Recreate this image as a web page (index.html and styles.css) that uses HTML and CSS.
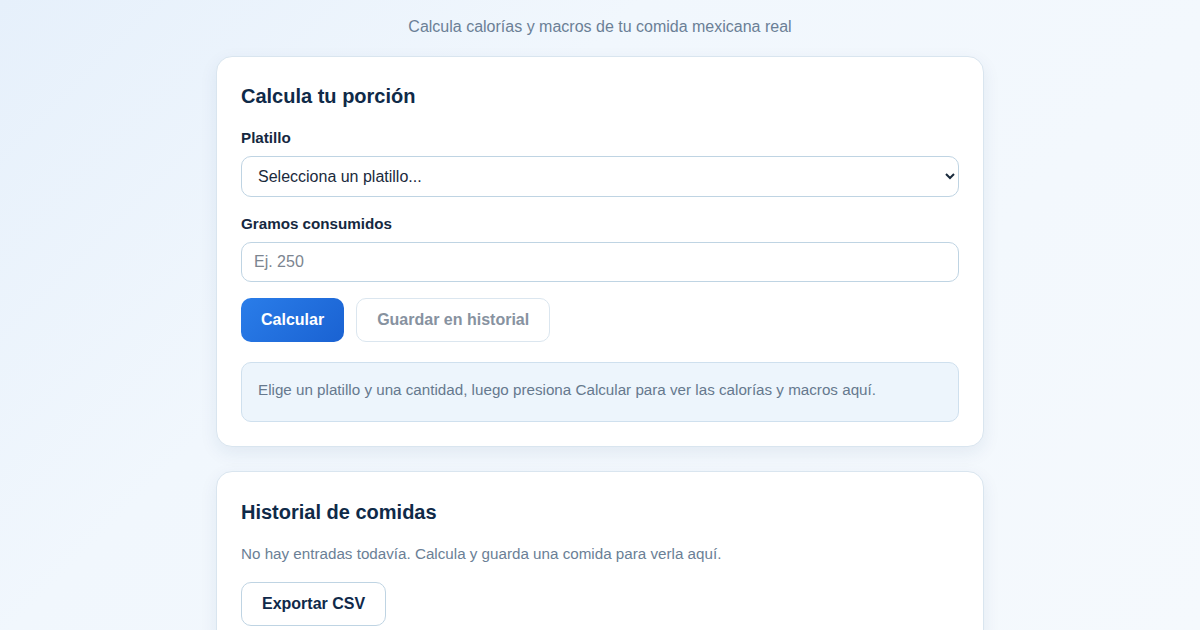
FILE: index.html
```html
<!DOCTYPE html>
<html lang="es">
<head>
<meta charset="utf-8">
<title>Calculadora</title>
<link rel="stylesheet" href="styles.css">
</head>
<body>
<main class="page">
  <p class="subtitle">Calcula calorías y macros de tu comida mexicana real</p>

  <section class="card">
    <h2 class="card-title">Calcula tu porción</h2>
    <label class="label" for="dish">Platillo</label>
    <select id="dish" class="field select">
      <option>Selecciona un platillo...</option>
    </select>
    <label class="label label-second" for="grams">Gramos consumidos</label>
    <input id="grams" class="field input" type="text" placeholder="Ej. 250">
    <div class="actions">
      <button class="btn btn-primary">Calcular</button>
      <button class="btn btn-ghost" disabled>Guardar en historial</button>
    </div>
    <div class="info">Elige un platillo y una cantidad, luego presiona Calcular para ver las calorías y macros aquí.</div>
  </section>

  <section class="card card-history">
    <h2 class="card-title card-title-second">Historial de comidas</h2>
    <p class="empty">No hay entradas todavía. Calcula y guarda una comida para verla aquí.</p>
    <button class="btn btn-outline">Exportar CSV</button>
  </section>
</main>
</body>
</html>
```

FILE: styles.css
```css
* { box-sizing: border-box; }

html, body {
  margin: 0;
  height: 100%;
}

body {
  font-family: "Liberation Sans", Arial, sans-serif;
  background: linear-gradient(135deg, #e6f0fb 0%, #f1f7fd 35%, #f5f9fd 100%);
  color: #10294a;
  overflow: hidden;
}

.page {
  width: 768px;
  margin: 0 auto;
  padding-top: 15px;
}

.subtitle {
  margin: 0 0 17px;
  text-align: center;
  font-size: 16px;
  line-height: 24px;
  color: #6b7f96;
}

.card {
  background: #ffffff;
  border: 1px solid #d9e5ef;
  border-radius: 16px;
  padding: 24px;
  box-shadow: 0 6px 18px rgba(30, 70, 120, 0.08);
  display: flex;
  flex-direction: column;
  align-items: flex-start;
}

.card-history {
  margin-top: 24px;
}

.card-title {
  margin: 0;
  font-size: 20px;
  line-height: 30px;
  font-weight: 700;
  color: #0f2a48;
}

.card-title-second {
  padding-top: 1px;
}

.label {
  margin-top: 17px;
  margin-bottom: 8px;
  font-size: 15.2px;
  line-height: 20px;
  font-weight: 700;
  color: #15283f;
}

.field {
  width: 100%;
  border: 1px solid #bfd4e3;
  border-radius: 10px;
  background: #ffffff;
  font-family: "Liberation Sans", Arial, sans-serif;
  font-size: 16px;
  color: #1a2a3c;
  padding: 0 12px;
}

.select {
  height: 41px;
}

.input {
  height: 40px;
  outline: none;
}

.input::placeholder {
  color: #7c8590;
}

.actions {
  display: flex;
  gap: 12px;
  margin-top: 16px;
}

.btn {
  height: 44px;
  border-radius: 10px;
  font-family: "Liberation Sans", Arial, sans-serif;
  font-size: 16px;
  font-weight: 700;
  padding: 0 20px;
  cursor: pointer;
}

.btn-primary {
  border: none;
  color: #ffffff;
  background: linear-gradient(135deg, #2a7de9 0%, #1a62d2 100%);
}

.btn-ghost {
  background: #ffffff;
  border: 1px solid #dbe6ef;
  color: #8792a0;
}

.btn-outline {
  background: #ffffff;
  border: 1px solid #bfd4e3;
  color: #10294a;
}

.info {
  width: 100%;
  margin-top: 20px;
  height: 60px;
  padding: 16px 16px 0;
  line-height: 22px;
  background: #edf5fc;
  border: 1px solid #cfe0ee;
  border-radius: 10px;
  font-size: 15.2px;
  color: #66798e;
}

.empty {
  margin: 16px 0 17px;
  font-size: 15.2px;
  line-height: 22px;
  color: #6b7f96;
}
```
